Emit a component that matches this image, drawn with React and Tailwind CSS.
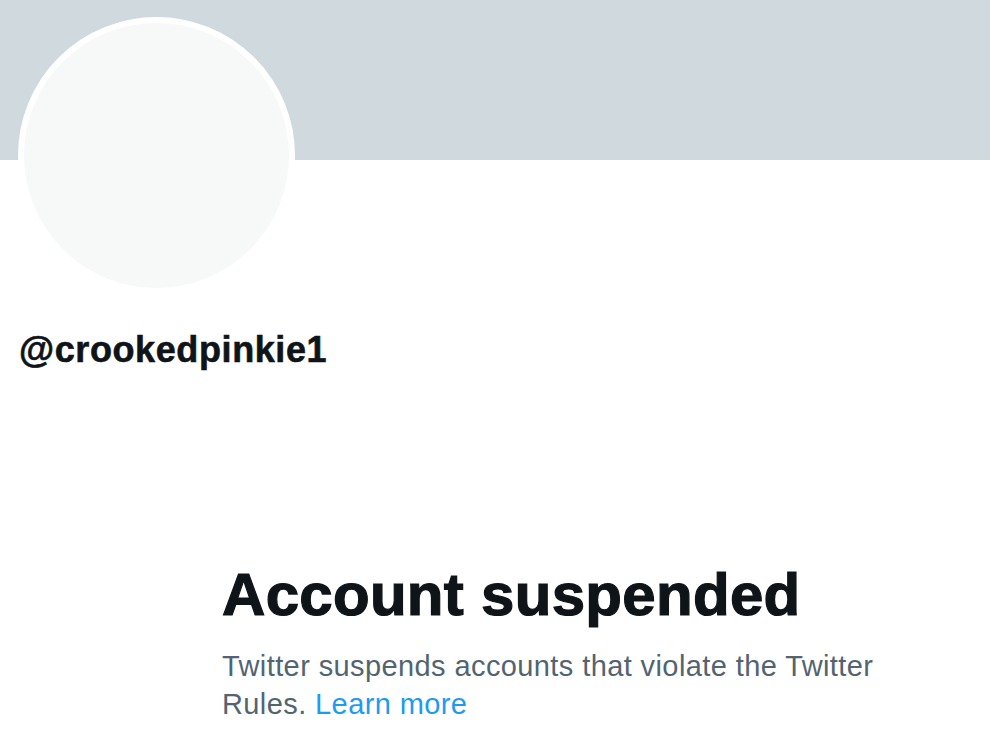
export default function App() {
  return (
    <div className="min-h-[733px] w-full bg-white overflow-hidden" style={{ fontFamily: '"Liberation Sans", Arial, sans-serif' }}>
      <div className="h-[160px] w-full bg-[#cfd9de]" />
      <div className="pl-[18px]">
        <div className="-mt-[143px] h-[277px] w-[277px] rounded-full border-[6px] border-white bg-[#f7f9f9]" />
      </div>
      <div className="mt-[36px] pl-[19px] text-[36px] leading-[40px] font-bold tracking-[0.6px] text-[#0f1419] [-webkit-text-stroke:0.6px_#0f1419]">
        @crookedpinkie1
      </div>
      <div className="mt-[195px] pl-[222px]">
        <h1 className="text-[60px] leading-[60px] font-bold tracking-[0.3px] text-[#0f1419] [-webkit-text-stroke:1.2px_#0f1419]">Account suspended</h1>
        <p className="mt-[22px] w-[680px] text-[29px] leading-[38px] tracking-[0.4px] text-[#536471]">
          Twitter suspends accounts that violate the Twitter Rules.{' '}
          <a className="text-[#1d9bf0]">Learn more</a>
        </p>
      </div>
    </div>
  );
}
